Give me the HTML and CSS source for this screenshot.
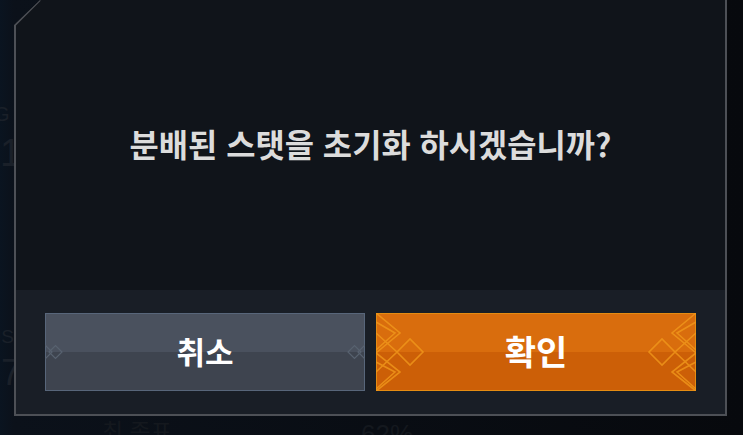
FILE: index.html
```html
<!DOCTYPE html>
<html lang="ko">
<head>
<meta charset="utf-8">
<title>스탯 초기화</title>
<link rel="stylesheet" href="styles.css">
</head>
<body>
<div class="ghost ghost-g">G</div>
<div class="ghost ghost-1">1</div>
<div class="ghost ghost-s">IS</div>
<div class="ghost ghost-7">7</div>
<div class="ghost ghost-label">최 종표</div>
<div class="ghost ghost-pct">62%</div>
<section class="dialog">
  <svg class="frame" width="713" height="416" viewBox="0 0 713 416" aria-hidden="true">
    <path d="M26 0 L1 25 V415 H712 V0" fill="none" stroke="#4d5056" stroke-width="2"/>
  </svg>
  <div class="message">
    <p class="title">분배된 스탯을 초기화 하시겠습니까?</p>
  </div>
  <div class="actions">
    <button class="btn btn-cancel" type="button">
      <svg class="ornament" width="320" height="78" viewBox="0 0 320 78" aria-hidden="true">
        <g fill="none" stroke="#586270" stroke-width="1.2">
          <path d="M0 32 L7 39 L0 46"/>
          <path d="M4 39 L10.500 32.500 L17 39 L10.500 45.500 Z"/>
          <path d="M320 32 L313 39 L320 46"/>
          <path d="M316 39 L309.500 32.500 L303 39 L309.500 45.500 Z"/>
        </g>
      </svg>
      <span class="label label-cancel">취소</span>
    </button>
    <button class="btn btn-ok" type="button">
      <svg class="ornament" width="320" height="78" viewBox="0 0 320 78" aria-hidden="true">
        <defs>
          <g id="orn">
            <path d="M0 0 L24 20 L0 40"/>
            <path d="M0 9 L19 20 L0 37"/>
            <path d="M0 40 L24 59 L0 78"/>
            <path d="M0 49 L19 59 L0 76"/>
            <path d="M0 20 L21 39 L0 59"/>
            <path d="M21 39 L34 26 L47 39 L34 52 Z"/>
          </g>
        </defs>
        <g fill="none" stroke="#f0981c" stroke-width="1.6" opacity=".8">
          <use href="#orn"/>
          <use href="#orn" transform="matrix(-1 0 0 1 320 0)"/>
        </g>
      </svg>
      <span class="label label-ok">확인</span>
    </button>
  </div>
</section>
</body>
</html>
```
FILE: styles.css
```css
* {
  box-sizing: border-box;
}

html,
body {
  margin: 0;
  height: 435px;
  overflow: hidden;
}

body {
  position: relative;
  padding-left: 14px;
  background: linear-gradient(90deg, #0a1420 0, #0b111a 14px, #07090d 100%);
  font-family: "Noto Sans CJK KR", "Noto Sans", sans-serif;
}

.ghost {
  position: absolute;
  color: #1a2029;
  font-family: "Liberation Sans", "Noto Sans CJK KR", sans-serif;
  line-height: 1;
}

.ghost-g {
  left: -6px;
  top: 104px;
  font-size: 20px;
}

.ghost-1 {
  left: 0;
  top: 134px;
  font-size: 38px;
}

.ghost-s {
  left: -4px;
  top: 327px;
  font-size: 19px;
}

.ghost-7 {
  left: 1px;
  top: 355px;
  font-size: 36px;
}

.ghost-label {
  left: 102px;
  top: 419px;
  color: #14181e;
  font-family: "Noto Sans CJK KR", sans-serif;
  font-size: 23px;
}

.ghost-pct {
  left: 361px;
  top: 421px;
  color: #14181e;
  font-size: 26px;
}

.dialog {
  position: relative;
  display: flex;
  flex-direction: column;
  width: 713px;
  height: 416px;
  background: #12151a;
  clip-path: polygon(26px 0, 100% 0, 100% 100%, 0 100%, 0 25px);
}

.frame {
  position: absolute;
  left: 0;
  top: 0;
  z-index: 2;
  pointer-events: none;
}

.message {
  flex: none;
  display: flex;
  justify-content: center;
  height: 290px;
  padding-top: 123px;
  background: #10141a;
}

.title {
  margin: 0;
  color: #dcdcdc;
  font-size: 31.800px;
  font-weight: 700;
  line-height: 40px;
  white-space: nowrap;
}

.actions {
  flex: 1;
  display: flex;
  gap: 11px;
  padding: 23px 30px 0 31px;
  background: #191e26;
}

.btn {
  position: relative;
  display: flex;
  align-items: center;
  justify-content: center;
  width: 320px;
  height: 78px;
  padding: 0 0 3px;
  color: #fff;
  font-family: inherit;
  font-weight: 700;
}

.btn-cancel {
  border: 1px solid #58667a;
  background: linear-gradient(#4a515e 0, #4a515e 50%, #3e444f 50%, #3e444f 100%);
}

.btn-ok {
  border: 1px solid #e58c12;
  background: linear-gradient(#d96d0d 0, #d96d0d 50%, #cc5f07 50%, #cc5f07 100%);
}

.ornament {
  position: absolute;
  left: -1px;
  top: -1px;
}

.label {
  position: relative;
  line-height: 1;
}

.label-cancel {
  font-size: 31px;
}

.label-ok {
  font-size: 34px;
}
```
